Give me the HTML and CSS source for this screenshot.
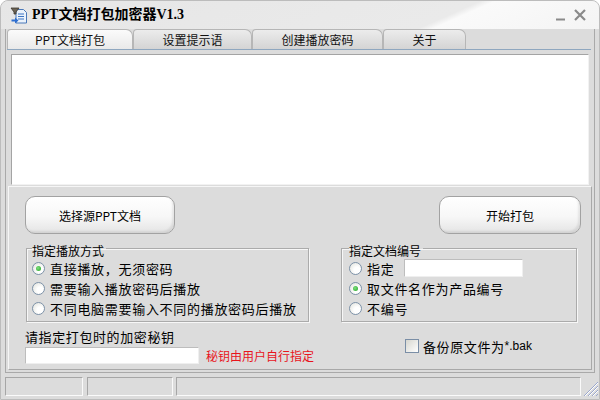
FILE: index.html
```html
<!DOCTYPE html>
<html lang="zh-CN">
<head>
    <meta charset="UTF-8">
    <title>PPT文档打包加密器V1.3</title>
    <link rel="stylesheet" href="styles.css">
</head>
<body>
    <div class="window">
        <div class="titlebar">
            <svg class="app-icon" width="18" height="17" viewBox="0 0 18 17">
                <path d="M6 2.5h7.5l3 3v10.5h-10.5z" fill="#eaf2fb" stroke="#4a78b8"/>
                <path d="M8 7h6M8 9.5h6M8 12h6" stroke="#3c74c4" stroke-width="1.2"/>
                <path d="M1 1h8l-3 4v2h-2v-2z" fill="#6b6355" stroke="#3d372e" stroke-width="0.8"/>
                <path d="M1.5 12.5h3.5v-2l3.5 3-3.5 3v-2h-3.5z" fill="#2f6fd0"/>
            </svg>
            <span class="title">PPT文档打包加密器V1.3</span>
            <div class="caption-btns">
                <svg width="12" height="14" viewBox="0 0 12 14"><path d="M1 11.5h9" stroke="#8a8a8a" stroke-width="2"/></svg>
                <svg width="14" height="14" viewBox="0 0 14 14"><path d="M2 2l10 10M12 2l-10 10" stroke="#8a8a8a" stroke-width="2.2"/></svg>
            </div>
        </div>

        <div class="main">
            <div class="tabs">
                <div class="tab tab-pack active">PPT文档打包</div>
                <div class="tab tab-hint">设置提示语</div>
                <div class="tab tab-pwd">创建播放密码</div>
                <div class="tab tab-about">关于</div>
            </div>
            <div class="tab-line"></div>
            <div class="listbox"></div>

            <div class="panel">
                <div class="btn-row">
                    <button class="btn btn-source">选择源PPT文档</button>
                    <button class="btn btn-start">开始打包</button>
                </div>

                <div class="groups">
                    <fieldset class="group group-play">
                        <legend>指定播放方式</legend>
                        <label class="opt"><span class="radio checked"></span>直接播放，无须密码</label>
                        <label class="opt"><span class="radio"></span>需要输入播放密码后播放</label>
                        <label class="opt"><span class="radio"></span>不同电脑需要输入不同的播放密码后播放</label>
                    </fieldset>
                    <fieldset class="group group-code">
                        <legend>指定文档编号</legend>
                        <label class="opt"><span class="radio"></span>指定<span class="textbox code-box"></span></label>
                        <label class="opt"><span class="radio checked"></span>取文件名作为产品编号</label>
                        <label class="opt"><span class="radio"></span>不编号</label>
                    </fieldset>
                </div>

                <div class="bottom-row">
                    <div class="key">
                        <div class="key-label">请指定打包时的加密秘钥</div>
                        <div class="key-line">
                            <span class="textbox key-box"></span>
                            <span class="hint">秘钥由用户自行指定</span>
                        </div>
                    </div>
                    <label class="backup"><span class="checkbox"></span>备份原文件为<span class="ext">*.bak</span></label>
                </div>
            </div>
        </div>

        <div class="statusbar">
            <div class="seg seg1"></div>
            <div class="seg seg2"></div>
            <div class="seg seg3"></div>
            <svg class="grip" width="17" height="16" viewBox="0 0 17 16">
                <path d="M16 2L2 16M16 6L6 16M16 10L10 16M16 14L14 16" stroke="#9aa6cc" stroke-width="1"/>
                <path d="M16 3L3 16M16 7L7 16M16 11L11 16" stroke="#ffffff" stroke-width="1"/>
            </svg>
        </div>
    </div>
</body>
</html>
```

FILE: styles.css
```css
body {
    margin: 0;
    background: #ffffff;
    font-family: "Noto Sans CJK SC", sans-serif;
    font-size: 12px;
    color: #000;
}

.window {
    width: 600px;
    height: 400px;
    box-sizing: border-box;
    border: 1px solid #bcbcbc;
    border-radius: 8px 8px 0 0;
    background: #dcdcdc;
    overflow: hidden;
}

/* title bar */
.titlebar {
    height: 28px;
    display: flex;
    align-items: center;
    padding-left: 9px;
    background: linear-gradient(156deg, #e6e6e6 0, #eaeaea 195px, #fafafa 201px, #f4f4f4 100%);
}

.app-icon {
    margin-right: 4px;
}

.title {
    font-family: "Liberation Serif", "Noto Sans CJK SC", serif;
    font-weight: bold;
    font-size: 14px;
    line-height: 16px;
}

.caption-btns {
    margin-left: auto;
    margin-right: 12px;
    display: flex;
    gap: 6px;
    align-items: center;
}

/* main frame */
.main {
    margin: 0 4px;
    border-left: 1px solid #a9a9a9;
    border-right: 1px solid #a9a9a9;
    border-bottom: 1px solid #a9a9a9;
    padding-bottom: 2px;
}

.tabs {
    display: flex;
    height: 20px;
    margin-left: 1px;
}

.tab {
    box-sizing: border-box;
    height: 20px;
    border: 1px solid #b6b6b6;
    border-bottom: none;
    border-radius: 4px 7px 0 0;
    background: linear-gradient(#ececec, #d4d4d4);
    text-align: center;
    line-height: 20px;
    color: #111;
}

.tab.active {
    background: linear-gradient(#fbfbfb, #e9e9e9);
}

.tab-pack { width: 126px; }
.tab-hint { width: 119px; }
.tab-pwd { width: 131px; }
.tab-about { width: 83px; }

.tab-line {
    height: 1px;
    margin: 0 3px 0 1px;
    background: #8fa7bf;
}

.listbox {
    height: 131px;
    margin: 4px 5px 0 5px;
    box-sizing: border-box;
    background: #ffffff;
    border: 1px solid;
    border-color: #a4a4a4 #f2f2f2 #f2f2f2 #a4a4a4;
}

/* lower panel */
.panel {
    margin: 1px 2px 0 2px;
    height: 184px;
    box-sizing: border-box;
    border: 1px solid;
    border-color: #f6f6f6 #a8a8a8 #a8a8a8 #f6f6f6;
}

.btn-row {
    display: flex;
    justify-content: space-between;
    margin-top: 9px;
    padding: 0 10px 0 16px;
}

.btn {
    height: 38px;
    border: 1px solid #a2a2a2;
    border-radius: 10px;
    background: linear-gradient(#ffffff 0%, #f7f7f7 55%, #e4e4e4 100%);
    box-shadow: inset -2px -2px 2px rgba(0, 0, 0, 0.08);
    font-family: "Noto Sans CJK SC", sans-serif;
    font-size: 12px;
    color: #000;
    padding: 0;
}

.btn-source { width: 150px; }
.btn-start { width: 142px; }

.groups {
    display: flex;
    margin-top: 4px;
    padding-left: 17px;
}

.group {
    margin: 0;
    padding: 0 0 3px 0;
    border: 1px solid #ababab;
    box-shadow: inset 1px 1px 0 #f7f7f7, 1px 1px 0 #f7f7f7;
}

.group legend {
    padding: 6px 2px 0 0;
    line-height: 14px;
    font-size: 12px;
}

.group-play {
    width: 283px;
    box-sizing: border-box;
    padding-left: 5px;
}

.group-code {
    width: 236px;
    box-sizing: border-box;
    margin-left: 32px;
    padding-left: 7px;
}

.opt {
    display: flex;
    align-items: center;
    height: 20px;
    font-size: 13px;
    letter-spacing: 0.7px;
}

.radio {
    width: 11px;
    height: 11px;
    border: 1px solid #7d92a8;
    border-radius: 50%;
    background: radial-gradient(circle at 65% 65%, #ffffff 30%, #dedfd8 100%);
    margin-right: 5px;
    flex: none;
    position: relative;
}

.radio.checked::after {
    content: "";
    position: absolute;
    left: 3px;
    top: 3px;
    width: 5px;
    height: 5px;
    border-radius: 50%;
    background: radial-gradient(circle at 40% 40%, #7fe07f, #21a121);
}

.textbox {
    display: inline-block;
    box-sizing: border-box;
    background: #ffffff;
    border: 1px solid;
    border-color: #bdbdbd #efefef #efefef #bdbdbd;
}

.code-box {
    width: 119px;
    height: 18px;
    margin-left: 10px;
}

.bottom-row {
    display: flex;
    margin-top: 7px;
    padding-left: 16px;
}

.key {
    width: 380px;
}

.key-label {
    line-height: 16px;
    font-size: 13px;
    letter-spacing: 0.6px;
}

.key-line {
    display: flex;
    align-items: center;
    margin-top: 2px;
}

.key-box {
    width: 174px;
    height: 17px;
}

.hint {
    margin-left: 7px;
    color: #e8141c;
    font-size: 12px;
}

.backup {
    display: flex;
    align-items: center;
    height: 14px;
    margin-top: 10px;
    font-size: 13px;
    letter-spacing: 0.6px;
}

.checkbox {
    width: 12px;
    height: 12px;
    border: 1px solid #7a8ea6;
    background: linear-gradient(135deg, #d6d6cf, #ffffff);
    margin-right: 4px;
}

.ext {
    font-family: "Liberation Sans", sans-serif;
    letter-spacing: 0;
    font-size: 12px;
}

/* status bar */
.statusbar {
    display: flex;
    align-items: flex-end;
    margin-top: 4px;
    padding-left: 4px;
    height: 19px;
}

.seg {
    height: 19px;
    box-sizing: border-box;
    border: 1px solid;
    border-color: #a6a6a6 #fafafa #fafafa #a6a6a6;
}

.seg1 { width: 78px; margin-right: 4px; }
.seg2 { width: 86px; margin-right: 3px; }
.seg3 { flex: 1; }

.grip {
    flex: none;
    margin-left: 1px;
}
```
